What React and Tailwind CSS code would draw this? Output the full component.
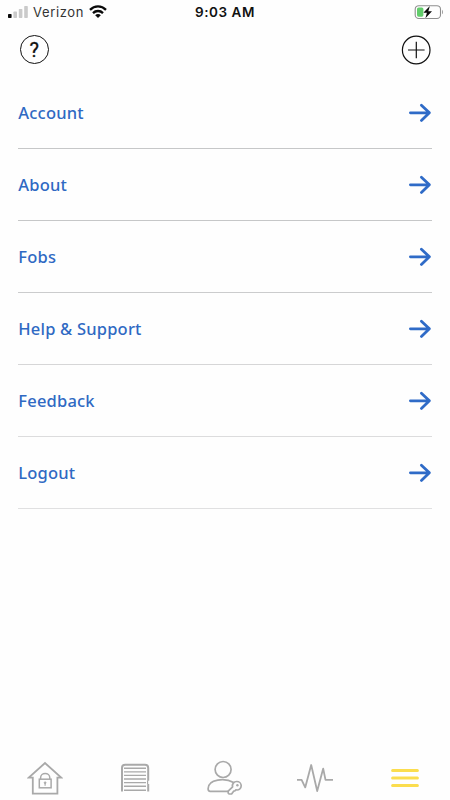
import React from "react";

const menuItems = [
	{ id: 1, name: "Account", border: "border-[#c6c7c8]" },
	{ id: 2, name: "About", border: "border-[#c6c7c8]" },
	{ id: 3, name: "Fobs", border: "border-[#cbcccd]" },
	{ id: 4, name: "Help & Support", border: "border-[#d6d6d7]" },
	{ id: 5, name: "Feedback", border: "border-[#dcdcdd]" },
	{ id: 6, name: "Logout", border: "border-[#e0e0e1]" },
];

const SignalIcon = () => (
	<svg width="20" height="13" viewBox="0 0 20 13">
		<rect x="0" y="8" width="3.6" height="4" rx="0.7" fill="#0a0a0a" />
		<rect x="5.4" y="5.5" width="3.6" height="6.5" rx="0.7" fill="#cacaca" />
		<rect x="10.8" y="3" width="3.6" height="9" rx="0.7" fill="#cacaca" />
		<rect x="16.2" y="0" width="3.6" height="12" rx="0.7" fill="#cacaca" />
	</svg>
);

const WifiIcon = () => (
	<svg width="18" height="14" viewBox="0 0 18 14" fill="none" stroke="#0a0a0a" strokeWidth="2.3">
		<path d="M1 4.9C5.5 0.3 12.5 0.3 17 4.9" />
		<path d="M4 8.1C6.8 5.3 11.2 5.3 14 8.1" />
		<path d="M6.2 10.2C7.8 8.7 10.2 8.7 11.8 10.2L9 13Z" fill="#0a0a0a" stroke="none" />
	</svg>
);

const BatteryIcon = () => (
	<svg width="30" height="16" viewBox="0 0 30 16">
		<rect x="1.2" y="1.7" width="25.3" height="12.8" rx="3.6" fill="none" stroke="#8e8e8e" strokeWidth="1.1" />
		<path d="M28 5.7C29.2 6.4 29.2 9.6 28 10.3Z" fill="#8e8e8e" />
		<rect x="3" y="3.5" width="6.4" height="9.2" rx="1.6" fill="#62cd6b" />
		<path d="M15.9 2L9.3 8.8H12.9L11.4 14.2L18 7.3H14.3Z" fill="#0a0a0a" stroke="#fefefe" strokeWidth="0.8" paintOrder="stroke" />
	</svg>
);

const ArrowIcon = () => (
	<svg width="24" height="20" viewBox="0 0 24 20" fill="none" stroke="#2f6bc7" strokeWidth="2.8" strokeLinecap="round" strokeLinejoin="round">
		<path d="M2.4 9.8H21.4M13.4 2.2L21.4 9.8L13.4 17.4" />
	</svg>
);

const HomeIcon = () => (
	<svg width="36" height="36" viewBox="0 0 36 36" fill="none" stroke="#a9a9a9" strokeWidth="1.8">
		<path d="M5.8 17.6H1.8L18 3L34.2 17.6H30.4V33.6H5.8V17.6Z" />
		<rect x="12.3" y="19.2" width="11.8" height="8.6" strokeWidth="1.5" />
		<path d="M13.6 19V17.8C13.6 12.2 22.8 12.2 22.8 17.8V19" strokeWidth="1.5" />
		<path d="M18.1 23V25.8" strokeWidth="1.2" />
		<circle cx="18.1" cy="22.7" r="0.9" fill="#a9a9a9" strokeWidth="0.8" />
	</svg>
);

const GarageIcon = () => (
	<svg width="36" height="36" viewBox="0 0 36 36" fill="none" stroke="#a9a9a9">
		<path d="M5 31.6V8Q5 4.8 8.2 4.8H28Q31.2 4.8 31.2 8V20.8M31.2 24V31.6" strokeWidth="2" />
		<path d="M30.6 20.6V24" strokeWidth="1.2" />
		<path d="M7 8.3H29M7 11.9H29M7 15.4H29M7 19H29M7 22.6H29M7 26.2H29M7 30.3H29" strokeWidth="1.4" />
	</svg>
);

const UserKeyIcon = () => (
	<svg width="36" height="36" viewBox="0 0 36 36" fill="none" stroke="#a9a9a9" strokeWidth="1.7" strokeLinejoin="round">
		<circle cx="16.1" cy="9.5" r="8" />
		<path d="M21.8 31.3H3.2C2 31.3 1.1 30.2 1.1 28.8C1 18.6 18.5 17.8 26.6 22.6" />
		<path d="M25.6 26.9C24.8 24 26.8 21.5 29.8 21.5C32.3 21.5 34.2 23.4 34.2 25.8C34.2 28.6 31.8 30.6 28.9 29.8L27.8 31H26.8L24.6 34H22.1L21.2 33.1V31.2Z" />
		<circle cx="30.4" cy="25.2" r="1.2" fill="#a9a9a9" stroke="none" />
	</svg>
);

const ActivityIcon = () => (
	<svg width="36" height="36" viewBox="0 0 36 36" fill="none" stroke="#a9a9a9" strokeWidth="1.8" strokeLinejoin="round">
		<path d="M0 19.9H4.6L8.2 27.4L14.2 5L20.2 31L26.2 8.6L28.5 19.9H36" />
	</svg>
);

const MenuIcon = () => (
	<svg width="36" height="36" viewBox="0 0 36 36" stroke="#fbdd4e" strokeWidth="3" strokeLinecap="round">
		<path d="M5.6 10.6H30.4M5.6 18.1H30.4M5.6 25.6H30.4" />
	</svg>
);

const navItems = [
	{ id: "home", icon: <HomeIcon /> },
	{ id: "garage", icon: <GarageIcon /> },
	{ id: "users", icon: <UserKeyIcon /> },
	{ id: "activity", icon: <ActivityIcon /> },
	{ id: "menu", icon: <MenuIcon /> },
];

const App = () => {
	return (
		<div className="flex h-screen w-full flex-col overflow-hidden bg-[#fefefe]">
			<div className="grid h-6 grid-cols-3 items-center font-['Inter',sans-serif] text-[13px] leading-6 text-[#111]">
				<div className="flex items-center pl-2">
					<SignalIcon />
					<span className="ml-[5px] w-[51px] tracking-[0.65px] text-[#333]">Verizon</span>
					<span className="ml-[5px]"><WifiIcon /></span>
				</div>
				<span className="text-center text-[13.5px] font-semibold tracking-[0.55px]">9:03 AM</span>
				<div className="flex justify-end pr-[6px]">
					<BatteryIcon />
				</div>
			</div>

			<header className="flex h-[53px] items-center justify-between pr-[19px] pb-[2px] pl-5">
				<button type="button" aria-label="Help" className="flex size-[28.5px] items-center justify-center rounded-full border border-[#111] font-['Roboto',sans-serif] text-[20px] leading-none font-normal text-[#111]">
					<span className="[-webkit-text-stroke:0.3px_#111]">?</span>
				</button>
				<button type="button" aria-label="Add">
					<svg width="30" height="30" viewBox="0 0 30 30" fill="none" stroke="#111">
						<circle cx="15.2" cy="15" r="13.8" strokeWidth="1.2" />
						<path d="M7 15H23.6M15.3 6.8V23.2" strokeWidth="1.2" />
					</svg>
				</button>
			</header>

			<ul className="mx-[18px] flex-1">
				{menuItems.map((item) => (
					<li key={item.id} className={`flex h-[72px] items-center justify-between border-b ${item.border}`}>
						<span className="pt-px pl-[0.3px] font-['Noto_Sans',sans-serif] text-[16.5px] font-medium tracking-[0.2px] text-[#2f69c3]">{item.name}</span>
						<ArrowIcon />
					</li>
				))}
			</ul>

			<nav className="grid h-10 grid-cols-5">
				{navItems.map((item) => (
					<button key={item.id} type="button" aria-label={item.id} className="flex items-start justify-center">
						{item.icon}
					</button>
				))}
			</nav>
		</div>
	);
};

export default App;
